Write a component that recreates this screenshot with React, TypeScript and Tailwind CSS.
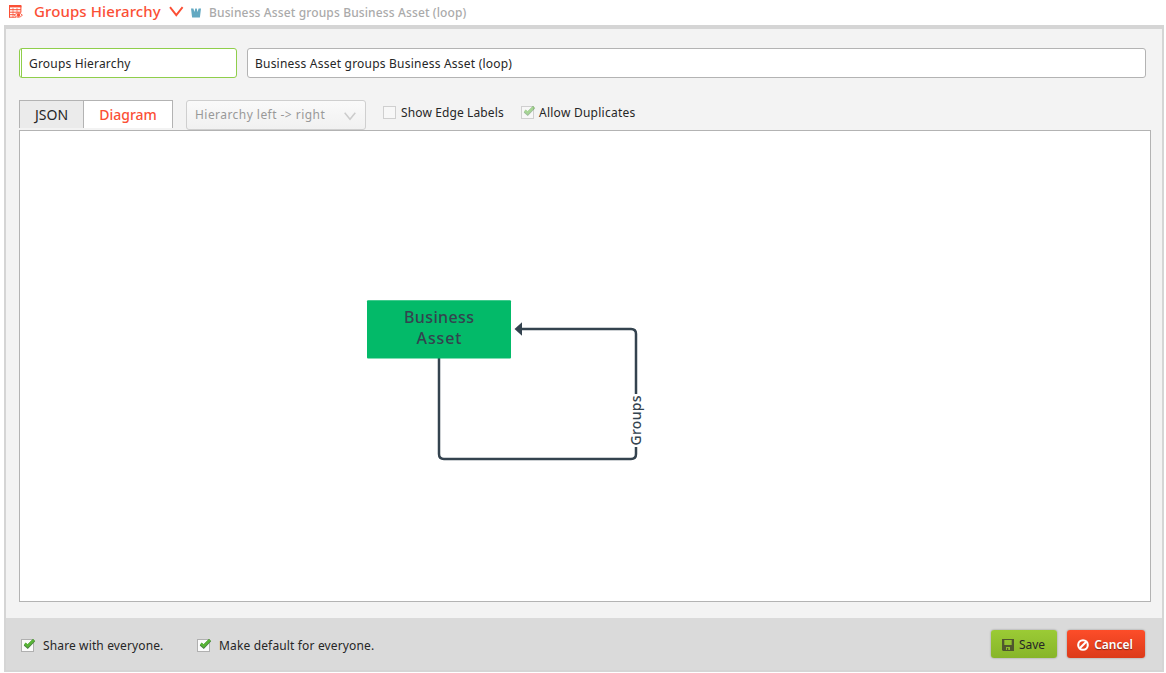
import React from "react";

function Check({ checked, muted }: { checked?: boolean; muted?: boolean }) {
  return (
    <span
      className={`relative block h-[13px] w-[13px] shrink-0 border ${
        muted ? "border-[#cfcfcf] bg-[#f7f7f7]" : "border-[#b0b0b0] bg-[#fbfbfb]"
      }`}
    >
      {checked && (
        <svg
          className={`absolute -top-[2px] left-[1px] ${muted ? "opacity-50" : ""}`}
          width="13"
          height="12"
          viewBox="0 0 13 12"
          fill="none"
        >
          <path d="M1.8 6.2 4.7 8.7 11 2.2" stroke="#477b42" strokeWidth="3.2" />
          <path d="M1.8 5.5 4.7 8 11 1.8" stroke="#58b536" strokeWidth="2.5" />
        </svg>
      )}
    </span>
  );
}

function Header() {
  return (
    <header className="flex h-[25px] items-start pl-2">
      <svg className="mt-[5px]" width="15" height="14" viewBox="0 0 15 14" fill="none" stroke="#fb4f35">
        <path d="M1 1.2h12.4" strokeWidth="2.4" />
        <path d="M1.5 1v11.5M12.9 1v6.5M1 4.7h12M1 7.2h12M1 9.7h6M1 12.2h7" />
        <path d="M5 3v9.5M9 3v4" opacity=".65" />
        <path d="M6.4 10.2Q10.2 5.6 14.4 10.2 10.2 14.4 6.4 10.2Z" fill="#fff" strokeWidth=".9" />
        <circle cx="10.4" cy="10.1" r="1.3" fill="#fb4f35" />
      </svg>
      <h1 className="ml-[11px] w-[128px] whitespace-nowrap text-[15px] font-medium leading-[22px] tracking-[0.1px] text-[#fb4f35]">
        Groups Hierarchy
      </h1>
      <svg className="ml-[7px] mt-[6px]" width="15" height="12" viewBox="0 0 15 12" fill="none">
        <path d="m1 1.2 6.3 8 6.3-8" stroke="#fb4f35" strokeWidth="1.9" />
      </svg>
      <svg className="ml-[7px] mt-[8px]" width="10" height="10" viewBox="0 0 10 10" fill="#63a9c2">
        <path d="M0 .5h2.4l1 3.4L4.3.5h1.4l.9 3.4 1-3.4H10L8.9 9.6H1.1Z" />
      </svg>
      <p className="ml-2 whitespace-nowrap text-[12px] font-medium leading-[26px] tracking-[0.13px] text-[#aaa]">
        Business Asset groups Business Asset (loop)
      </p>
    </header>
  );
}

function Diagram() {
  return (
    <svg width="1130" height="470" viewBox="20 131 1130 470" className="block">
      <path
        d="M439 358V454Q439 459 444 459H631Q636 459 636 454V334Q636 329 631 329H521"
        fill="none"
        stroke="#34434f"
        strokeWidth="2.5"
      />
      <path d="M514.5 329 522 322.2V335.8Z" fill="#34434f" />
      <rect x="367" y="300.3" width="144" height="58.2" rx="1" fill="#03ba69" />
      <g fill="#34434f" textAnchor="middle" fontSize="16" fontWeight="500">
        <text x="439" y="323" textLength="70">Business</text>
        <text x="439" y="344" textLength="45">Asset</text>
      </g>
      <rect x="629" y="394" width="14" height="53" fill="#fff" />
      <text
        transform="translate(640.5 420.5) rotate(-90)"
        textAnchor="middle"
        fontSize="14"
        fontWeight="500"
        textLength="50"
        fill="#34434f"
      >
        Groups
      </text>
    </svg>
  );
}

function SaveIcon() {
  return (
    <svg className="mt-[2px]" width="12" height="12" viewBox="0 0 12 12">
      <path fill="#50582e" fillRule="evenodd" d="M0 0h12v12H1L0 11ZM2.3 1v5h7.4V1ZM4 8v3h4V8Zm1 1h1.2v2H5Z" />
    </svg>
  );
}

function CancelIcon() {
  return (
    <svg className="mt-[2px]" width="12" height="12" viewBox="0 0 12 12" fill="none" stroke="#fff" strokeWidth="2.1">
      <circle cx="6" cy="6" r="4.8" />
      <path d="m2.8 9.2 6.4-6.4" />
    </svg>
  );
}

export default function App() {
  return (
    <div className="h-[673px] w-[1166px] overflow-hidden bg-white font-['Noto_Sans','Open_Sans',sans-serif] text-[12px] text-[#262626]">
      <Header />
      <main className="ml-1 flex h-[647px] w-[1160px] flex-col border-2 border-t-4 border-[#d5d5d5] bg-[#f3f3f3]">
        <section className="flex h-[589px] flex-col px-[13px] pr-[11px] pt-[19px]">
          <div className="flex gap-[10px]">
            <div className="flex h-[30px] w-[218px] rounded-[3px] border border-[#8fce4b] bg-white pl-[1px]">
              <div className="flex flex-1 items-center whitespace-nowrap border-l border-[#8fce4b] pl-[7px] pt-[2px] tracking-[0.19px]">
                Groups Hierarchy
              </div>
            </div>
            <div className="flex h-[30px] w-[899px] items-center whitespace-nowrap rounded-[3px] border border-[#b3b3b3] bg-white pl-[7px] pt-[2px] tracking-[0.22px]">
              Business Asset groups Business Asset (loop)
            </div>
          </div>
          <div className="mt-[22px] flex h-[30px] items-start">
            <div className="flex h-7 w-[65px] items-center justify-center border border-b-0 border-[#b3b3b3] bg-[#ebebeb] text-[14px]">
              JSON
            </div>
            <div className="-ml-px flex h-7 w-[90px] items-center justify-center border border-b-0 border-[#b3b3b3] bg-white text-[14px] font-medium text-[#fb4f35]">
              Diagram
            </div>
            <div className="ml-[13px] flex h-[30px] w-[180px] items-center justify-between whitespace-nowrap rounded-[3px] border border-[#cfcfcf] bg-gradient-to-b from-[#fafafa] to-[#f1f1f1] pl-2 pr-[9px] tracking-[0.45px] text-[#999]">
              Hierarchy left -&gt; right
              <svg className="mt-[3px]" width="12" height="9" viewBox="0 0 12 9" fill="none">
                <path d="m.7.7 5.3 6.6L11.3.7" stroke="#ccc" strokeWidth="1.5" />
              </svg>
            </div>
            <label className="ml-[17px] flex h-[25px] items-center gap-[5px] whitespace-nowrap tracking-[0.12px]">
              <Check muted />
              <span className="w-[104px]">Show Edge Labels</span>
            </label>
            <label className="ml-4 flex h-[25px] items-center gap-[5px] whitespace-nowrap tracking-[0.25px]">
              <Check muted checked />
              <span>Allow Duplicates</span>
            </label>
          </div>
          <div className="h-[472px] w-[1132px] border border-[#b3b3b3] bg-white">
            <Diagram />
          </div>
        </section>
        <footer className="flex h-[52px] items-center bg-[#dadada] pl-[15px] pr-[17px]">
          <label className="mt-[3px] flex w-[176px] items-center gap-[9px] whitespace-nowrap tracking-[0.13px]">
            <Check checked />
            Share with everyone.
          </label>
          <label className="mt-[3px] flex items-center gap-[9px] whitespace-nowrap tracking-[0.15px]">
            <Check checked />
            Make default for everyone.
          </label>
          <div className="ml-auto flex gap-[10px]">
            <button className="flex h-[28px] w-[66px] items-center justify-center gap-[5px] rounded-[3px] bg-gradient-to-b from-[#9bcb35] to-[#87b529] pr-px shadow-[0_0_2px_#888]">
              <SaveIcon />
              <span className="pt-[2px]">Save</span>
            </button>
            <button className="flex h-[28px] w-[78px] items-center justify-center gap-[5px] rounded-[3px] bg-gradient-to-b from-[#fd4d29] to-[#dc3a19] pr-[2px] font-semibold text-white shadow-[0_0_2px_#888]">
              <CancelIcon />
              <span className="pt-[2px] tracking-[-0.05px] [text-shadow:0_1px_1px_#7d2513]">Cancel</span>
            </button>
          </div>
        </footer>
      </main>
    </div>
  );
}
